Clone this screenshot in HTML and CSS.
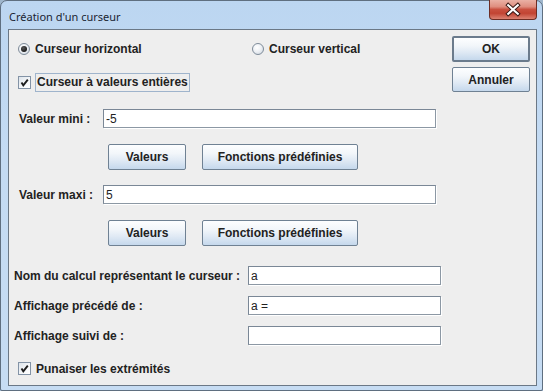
FILE: index.html
```html
<!DOCTYPE html>
<html lang="fr">
<head>
    <meta charset="UTF-8">
    <title>Création d'un curseur</title>
    <link rel="stylesheet" href="styles.css">
</head>
<body>
    <div class="window">
        <div class="titlebar">
            <span class="title">Création d'un curseur</span>
            <button class="close-btn" type="button" aria-label="Fermer">
                <svg width="48" height="20" viewBox="0 0 48 20">
                    <path d="M19 5 L29 14 M29 5 L19 14" stroke="#3a1a16" stroke-width="4.2" stroke-linecap="square" fill="none"/>
                    <path d="M19 5 L29 14 M29 5 L19 14" stroke="#fff" stroke-width="2.2" stroke-linecap="square" fill="none"/>
                </svg>
            </button>
        </div>

        <div class="content">
            <div class="form">
                <div class="row row-radios">
                    <label class="choice choice-first"><span class="radio checked"></span>Curseur horizontal</label>
                    <label class="choice"><span class="radio"></span>Curseur vertical</label>
                </div>

                <div class="row row-check">
                    <label class="choice"><span class="checkbox"><svg width="11" height="11" viewBox="0 0 11 11"><path d="M2.5 5.5 L4.3 8.3 L8.8 2.6" stroke="#1d1d1d" stroke-width="1.9" fill="none"/></svg></span><span class="focus">Curseur à valeurs entières</span></label>
                </div>

                <div class="row row-field row-mini">
                    <span class="field-label label-short">Valeur mini :</span>
                    <input class="text-field field-long" type="text" value="-5">
                </div>

                <div class="row row-buttons">
                    <button class="btn btn-values" type="button">Valeurs</button>
                    <button class="btn btn-functions" type="button">Fonctions prédéfinies</button>
                </div>

                <div class="row row-field row-maxi">
                    <span class="field-label label-short">Valeur maxi :</span>
                    <input class="text-field field-long" type="text" value="5">
                </div>

                <div class="row row-buttons">
                    <button class="btn btn-values" type="button">Valeurs</button>
                    <button class="btn btn-functions" type="button">Fonctions prédéfinies</button>
                </div>

                <div class="row row-field row-nom">
                    <span class="field-label label-wide">Nom du calcul représentant le curseur :</span>
                    <input class="text-field field-short" type="text" value="a">
                </div>

                <div class="row row-field row-small">
                    <span class="field-label label-wide">Affichage précédé de :</span>
                    <input class="text-field field-short" type="text" value="a =">
                </div>

                <div class="row row-field row-small">
                    <span class="field-label label-wide">Affichage suivi de :</span>
                    <input class="text-field field-short" type="text" value="">
                </div>

                <div class="row row-pin">
                    <label class="choice"><span class="checkbox"><svg width="11" height="11" viewBox="0 0 11 11"><path d="M2.5 5.5 L4.3 8.3 L8.8 2.6" stroke="#1d1d1d" stroke-width="1.9" fill="none"/></svg></span>Punaiser les extrémités</label>
                </div>
            </div>

            <div class="actions">
                <button class="btn btn-default" type="button">OK</button>
                <button class="btn btn-action" type="button">Annuler</button>
            </div>
        </div>
    </div>
</body>
</html>
```

FILE: styles.css
```css
* {
    margin: 0;
    padding: 0;
    box-sizing: border-box;
}

body {
    width: 543px;
    height: 391px;
    overflow: hidden;
    background: #9fb6cc;
}

.window {
    width: 543px;
    height: 391px;
    padding: 0 5px 4px 7px;
    background: linear-gradient(180deg, #bcd6f1 0%, #c4dbf3 40%, #c6dcf3 100%);
    border: 1px solid #5f6f80;
    border-radius: 7px 7px 2px 2px;
    display: flex;
    flex-direction: column;
}

/* barre de titre */
.titlebar {
    height: 28px;
    margin: 0 -5px 0 -7px;
    padding-left: 8px;
    display: flex;
    align-items: flex-start;
    justify-content: space-between;
}

.title {
    font-family: 'Noto Sans', 'Open Sans', sans-serif;
    font-size: 11px;
    color: #1b2532;
    line-height: 14px;
    margin-top: 9px;
}

.close-btn {
    width: 48px;
    height: 20px;
    margin-right: 5px;
    margin-top: -1px;
    border: 1px solid #6d2d24;
    border-top: none;
    border-radius: 0 0 4px 4px;
    background: linear-gradient(180deg, #eab1a5 0%, #df8e7f 35%, #c9503f 50%, #c24433 70%, #dc8272 100%);
    display: flex;
    align-items: center;
    justify-content: center;
}

.close-btn svg {
    display: block;
}

/* panneau principal */
.content {
    flex: 1;
    background: #eeeeee;
    border: 1px solid #6b7886;
    display: flex;
    align-items: flex-start;
    font-family: 'Liberation Sans', Arial, sans-serif;
    font-size: 12px;
    font-weight: bold;
    color: #222;
}

.form {
    flex: 1;
    display: flex;
    flex-direction: column;
}

.row {
    display: flex;
    align-items: center;
}

.row-radios {
    height: 26px;
    margin-top: 6px;
    padding-left: 9px;
}

.row-check {
    height: 19px;
    margin-top: 11px;
    padding-left: 9px;
}

.row-mini {
    margin-top: 17px;
}

.row-maxi {
    margin-top: 15px;
}

.row-nom {
    margin-top: 20px;
}

.row-small {
    margin-top: 11px;
}

.row-pin {
    height: 19px;
    margin-top: 14px;
    padding-left: 9px;
}

.choice {
    display: flex;
    align-items: center;
    white-space: nowrap;
}

.choice-first {
    width: 234px;
}

/* boutons radio */
.radio {
    width: 12px;
    height: 12px;
    margin-right: 5px;
    border: 1px solid #7e8b99;
    border-radius: 50%;
    background: radial-gradient(circle at 40% 35%, #ffffff 0%, #eef1f5 45%, #c9d2dc 100%);
    display: flex;
    align-items: center;
    justify-content: center;
}

.radio.checked::after {
    content: "";
    width: 6px;
    height: 6px;
    border-radius: 50%;
    background: radial-gradient(circle at 40% 35%, #5a5a5a 0%, #1a1a1a 70%);
}

/* cases à cocher */
.checkbox {
    width: 13px;
    height: 13px;
    margin-right: 4px;
    border: 1px solid #8393a6;
    background: linear-gradient(135deg, #dde3ea 0%, #f6f8fa 60%, #ffffff 100%);
    display: flex;
    align-items: center;
    justify-content: center;
}

.row-pin .checkbox {
    margin-right: 5px;
}

.checkbox svg {
    display: block;
}

.focus {
    height: 19px;
    padding: 0 1px 0 1px;
    border: 1px solid #9fb4cc;
    line-height: 17px;
}

/* champs texte */
.row-field {
    height: 19px;
}

.field-label {
    white-space: nowrap;
}

.label-short {
    width: 84px;
    margin-left: 10px;
}

.label-wide {
    width: 234px;
    margin-left: 5px;
}

.text-field {
    height: 19px;
    border: 1px solid #7a8796;
    border-right-color: #8c98a4;
    border-bottom-color: #8c98a4;
    box-shadow: 1px 1px 0 #ffffff;
    background: #fff;
    padding: 0 2px;
    font-family: 'Liberation Sans', Arial, sans-serif;
    font-size: 12px;
    color: #222;
    outline: none;
}

.field-long {
    width: 333px;
}

.field-short {
    width: 193px;
}

/* boutons */
.row-buttons {
    height: 26px;
    margin-top: 16px;
    padding-left: 99px;
    gap: 16px;
}

.btn {
    height: 26px;
    border: 1px solid #6f8193;
    border-radius: 2px;
    background: linear-gradient(180deg, #fdfeff 0%, #f2f6fa 35%, #dfe9f4 65%, #c5d8ec 100%);
    font-family: 'Liberation Sans', Arial, sans-serif;
    font-size: 12px;
    font-weight: bold;
    color: #222;
}

.btn-values {
    width: 78px;
}

.btn-functions {
    width: 156px;
}

.actions {
    width: 78px;
    margin: 6px 6px 0 0;
    display: flex;
    flex-direction: column;
    gap: 5px;
}

.btn-default {
    height: 26px;
    border: 2px solid #6b7b8c;
}

.btn-action {
    height: 25px;
}
```
